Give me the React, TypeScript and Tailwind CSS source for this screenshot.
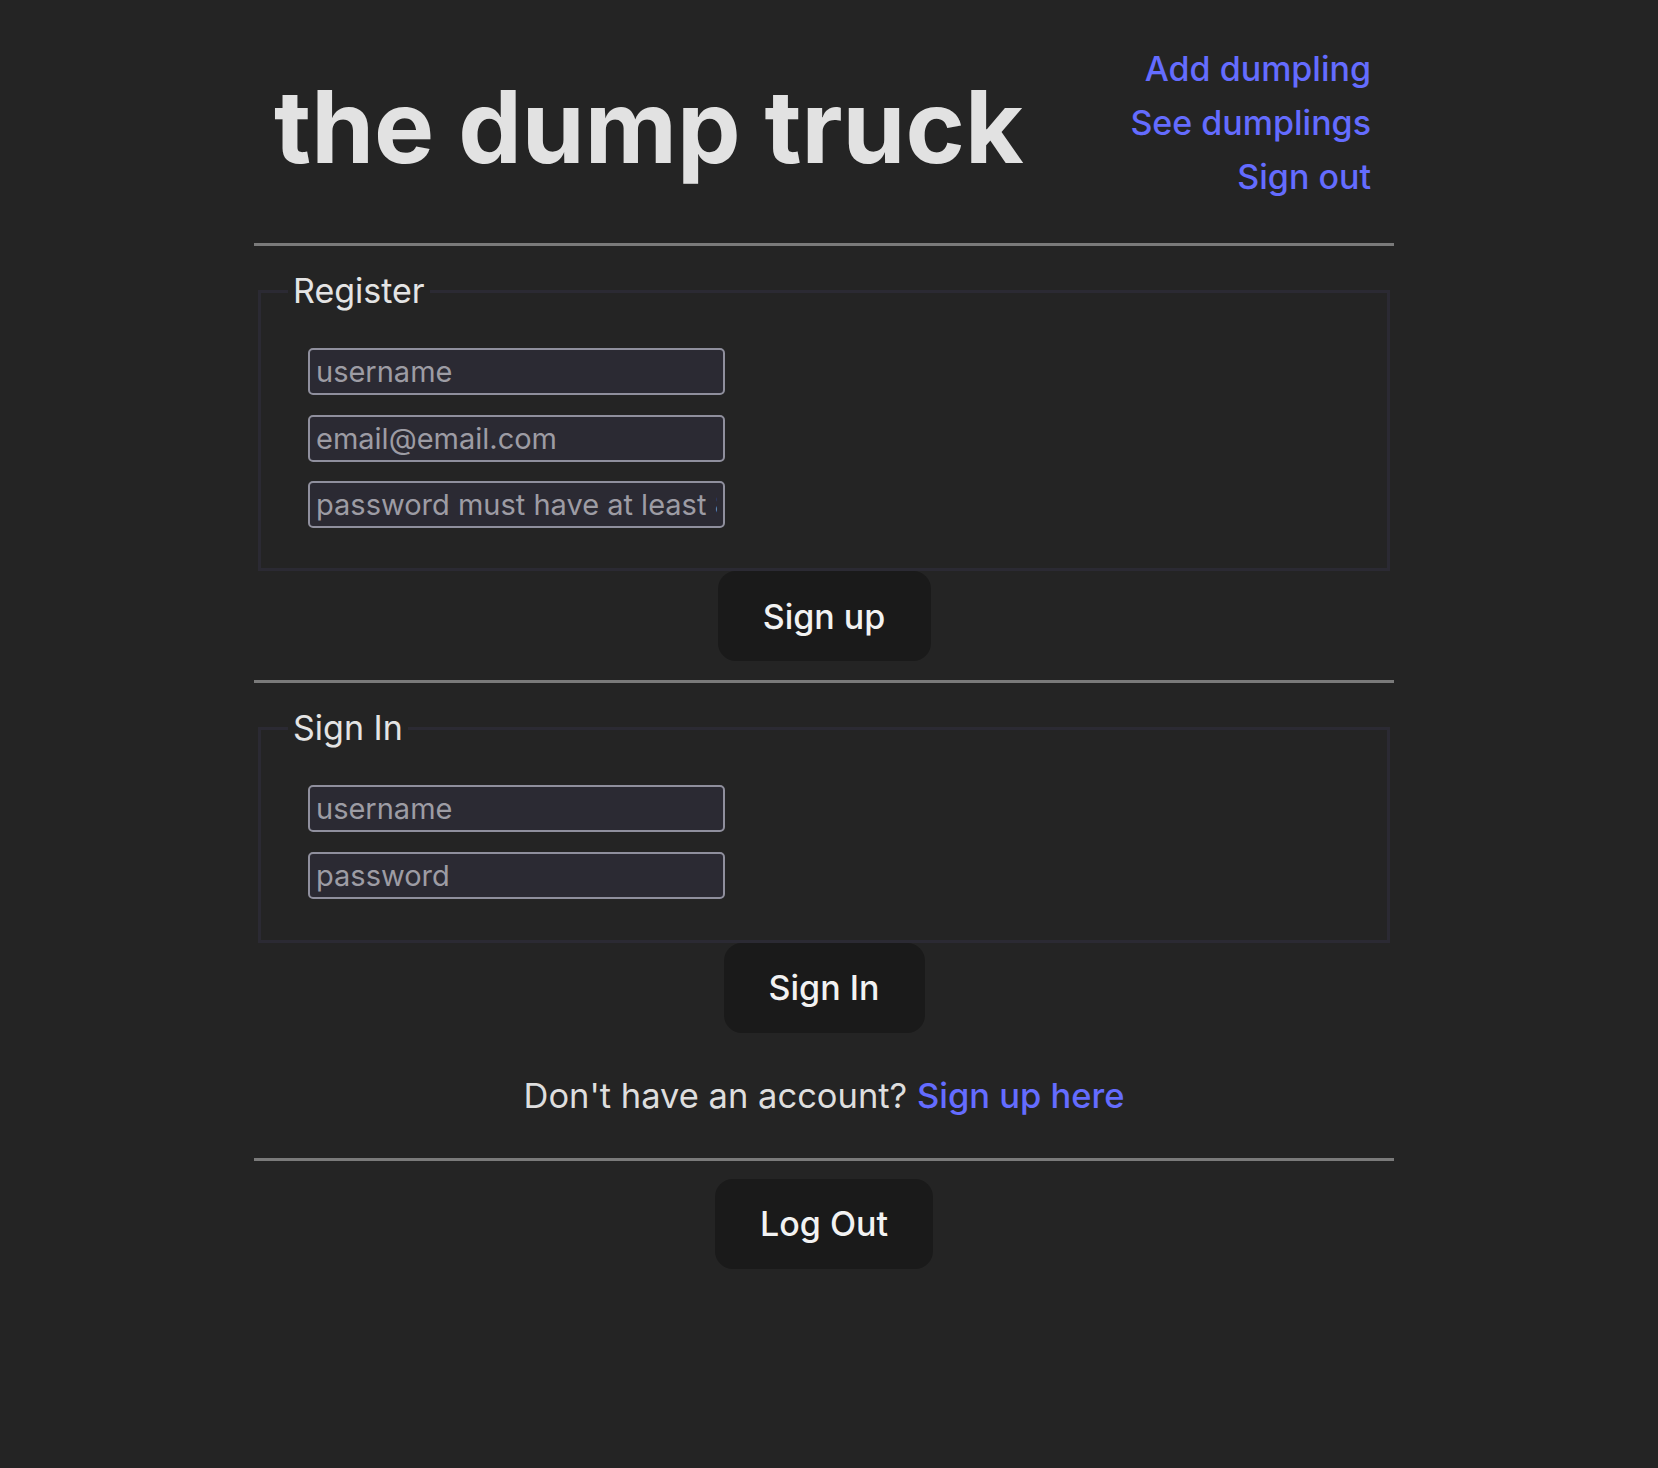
import React from "react";

function Field({ placeholder }: { placeholder: string }) {
  return (
    <input
      type="text"
      placeholder={placeholder}
      className="block h-[47px] w-[417px] rounded-[5px] border-2 border-[#8f8f9d] bg-[#2b2a33] px-[6px] text-[29px] text-[#fbfbfe] outline-none placeholder:text-[#9d9ca4]"
    />
  );
}

function Hr() {
  return <div className="h-[3px] w-full bg-[#7a7a7a]" />;
}

export default function App() {
  return (
    <div className="min-h-[1468px] w-full bg-[#242424] font-['Inter',sans-serif] text-[#dedede]">
      <div className="ml-[254px] w-[1140px]">
        <header className="flex items-center justify-between pb-[21px] pl-[20px] pr-[23px] pt-[42px]">
          <h1 className="mt-[6px] text-[101px] font-bold leading-[110px] tracking-[0px] text-[#e2e2e2]">
            the dump truck
          </h1>
          <nav className="flex flex-col items-end text-[34px] font-medium leading-[54px] text-[#646cff]">
            <a href="#">Add dumpling</a>
            <a href="#">See dumplings</a>
            <a href="#">Sign out</a>
          </nav>
        </header>

        <div className="mt-[18px]">
          <Hr />
        </div>

        <section className="mt-[18px]">
          <fieldset className="mx-[4px] border-[3px] border-[#2b2a33] px-[27px] pb-[40px] pt-0">
            <legend className="px-[5px] text-[34px] leading-[54px] text-[#e4e4e4]">Register</legend>
            <div className="flex flex-col gap-[19.5px] pl-[20px] pt-[30px]">
              <Field placeholder="username" />
              <Field placeholder="email@email.com" />
              <Field placeholder="password must have at least 8 characters" />
            </div>
          </fieldset>
          <div className="flex justify-center">
            <button className="h-[90px] w-[213px] rounded-[18px] bg-[#1a1a1a] text-[34px] font-medium text-[#f2f2f2]">
              Sign up
            </button>
          </div>
        </section>

        <div className="mt-[19px]">
          <Hr />
        </div>

        <section className="mt-[18px]">
          <fieldset className="mx-[4px] border-[3px] border-[#2b2a33] px-[27px] pb-[41px] pt-0">
            <legend className="px-[5px] text-[34px] leading-[54px] text-[#e4e4e4]">Sign In</legend>
            <div className="flex flex-col gap-[19.5px] pl-[20px] pt-[30px]">
              <Field placeholder="username" />
              <Field placeholder="password" />
            </div>
          </fieldset>
          <div className="flex justify-center">
            <button className="h-[90px] w-[201px] rounded-[18px] bg-[#1a1a1a] text-[34px] font-medium text-[#f2f2f2]">
              Sign In
            </button>
          </div>
          <p className="mt-[36px] text-center text-[34.5px] leading-[54px]">
            Don't have an account?{" "}
            <a href="#" className="font-medium text-[#646cff]">
              Sign up here
            </a>
          </p>
        </section>

        <div className="mt-[35px]">
          <Hr />
        </div>

        <div className="mt-[18px] flex justify-center">
          <button className="h-[90px] w-[218px] rounded-[18px] bg-[#1a1a1a] text-[34px] font-medium text-[#f2f2f2]">
            Log Out
          </button>
        </div>
      </div>
    </div>
  );
}
